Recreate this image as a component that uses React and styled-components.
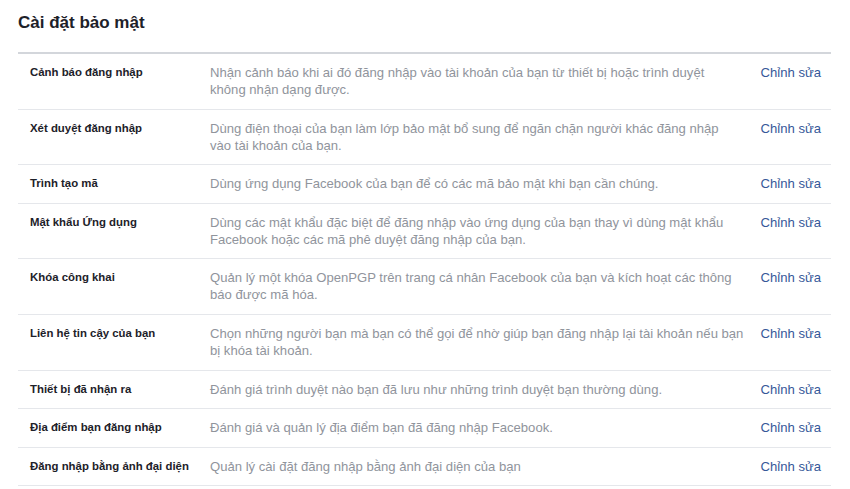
import React from 'react';
import styled, { createGlobalStyle } from 'styled-components';

// each description is split into the lines it shows in the 530px column
const rows = [
  {
    label: 'Cảnh báo đăng nhập',
    lines: [
      'Nhận cảnh báo khi ai đó đăng nhập vào tài khoản của bạn từ thiết bị hoặc trình duyệt',
      'không nhận dạng được.',
    ],
  },
  {
    label: 'Xét duyệt đăng nhập',
    lines: [
      'Dùng điện thoại của bạn làm lớp bảo mật bổ sung để ngăn chặn người khác đăng nhập',
      'vào tài khoản của bạn.',
    ],
  },
  {
    label: 'Trình tạo mã',
    lines: ['Dùng ứng dụng Facebook của bạn để có các mã bảo mật khi bạn cần chúng.'],
  },
  {
    label: 'Mật khẩu Ứng dụng',
    lines: [
      'Dùng các mật khẩu đặc biệt để đăng nhập vào ứng dụng của bạn thay vì dùng mật khẩu',
      'Facebook hoặc các mã phê duyệt đăng nhập của bạn.',
    ],
  },
  {
    label: 'Khóa công khai',
    lines: [
      'Quản lý một khóa OpenPGP trên trang cá nhân Facebook của bạn và kích hoạt các thông',
      'báo được mã hóa.',
    ],
  },
  {
    label: 'Liên hệ tin cậy của bạn',
    lines: [
      'Chọn những người bạn mà bạn có thể gọi để nhờ giúp bạn đăng nhập lại tài khoản nếu bạn',
      'bị khóa tài khoản.',
    ],
  },
  {
    label: 'Thiết bị đã nhận ra',
    lines: ['Đánh giá trình duyệt nào bạn đã lưu như những trình duyệt bạn thường dùng.'],
  },
  {
    label: 'Địa điểm bạn đăng nhập',
    lines: ['Đánh giá và quản lý địa điểm bạn đã đăng nhập Facebook.'],
  },
  {
    label: 'Đăng nhập bằng ảnh đại diện',
    lines: ['Quản lý cài đặt đăng nhập bằng ảnh đại diện của bạn'],
  },
];

const SecuritySettings = () => {
  return (
    <Page>
      <Title>Cài đặt bảo mật</Title>
      <List>
        {rows.map((row) => (
          <Row key={row.label}>
            <Label>{row.label}</Label>
            <Description>
              {row.lines.map((line) => (
                <Line key={line}>{line}</Line>
              ))}
            </Description>
            <EditLink href="#">Chỉnh sửa</EditLink>
          </Row>
        ))}
      </List>
    </Page>
  );
};

const GlobalStyle = createGlobalStyle`
  html, body {
    margin: 0;
    background: #fff;
  }
  body {
    font-family: "Liberation Sans", Arial, sans-serif;
    -webkit-font-smoothing: antialiased;
  }
`;

const Page = styled.div`
  width: 813px;
  padding: 11px 0 0 18px;
`;

const Title = styled.h2`
  margin: 0;
  height: 41px;
  font-size: 17px;
  line-height: 24px;
  font-weight: bold;
  color: #1d2129;
`;

const List = styled.div`
  border-top: 2px solid #d3d6db;
`;

const Row = styled.div`
  display: grid;
  grid-template-columns: 180px 540px 1fr;
  align-items: start;
  padding: 10px 10px 10.6px 12px;
  border-bottom: 1px solid #e5e7eb;
  font-size: 13.1px;
  line-height: 17px;
`;

const Label = styled.div`
  font-weight: bold;
  color: #1d2129;
  font-size: 11.4px;
`;

const Description = styled.div`
  color: #90949c;
`;

const Line = styled.div`
  white-space: nowrap;
`;

const EditLink = styled.a`
  color: #365899;
  text-decoration: none;
  justify-self: end;
  white-space: nowrap;
`;

const App = () => (
  <>
    <GlobalStyle />
    <SecuritySettings />
  </>
);

export default App;
